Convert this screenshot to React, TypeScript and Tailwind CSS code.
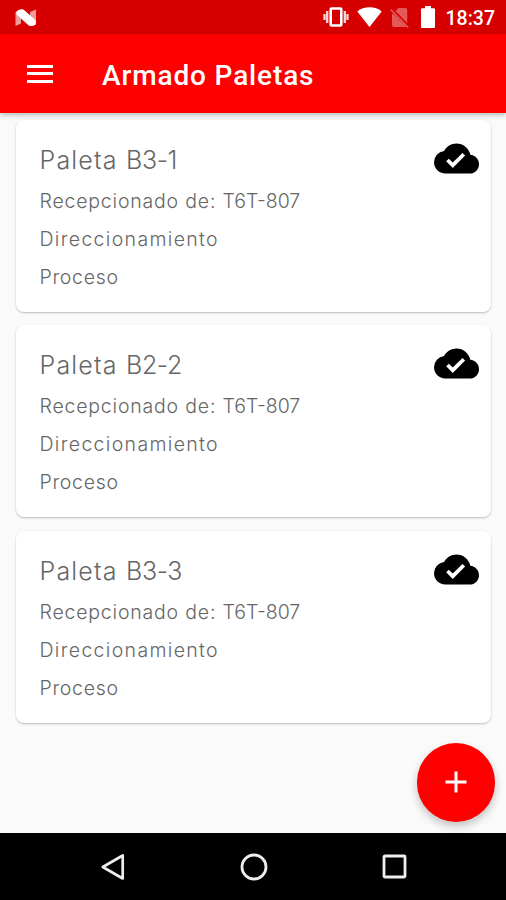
import { MdCloudDone } from 'react-icons/md';

const pallets = [
  { code: 'B3-1', source: 'T6T-807' },
  { code: 'B2-2', source: 'T6T-807' },
  { code: 'B3-3', source: 'T6T-807' },
];

const StatusBar = () => (
  <div className="flex h-[34px] shrink-0 items-center justify-between bg-[#d60000] pl-[15px] pr-[11px] text-white">
    <svg width="22" height="18" viewBox="0 0 22 18" className="mt-px">
      <path d="M.5 3L6 .5V14.500L.5 17zM15 3l6-2.500V14l-6 3z" fill="#fff" opacity=".6" />
      <path d="M1.500 2.500Q4.500-.2 8.500.4L20.800 11.500V15.500Q17.500 17.800 14 16.700L1.500 5.500z" fill="#fff" />
    </svg>
    <div className="flex items-center">
      <svg width="26" height="20" viewBox="0 0 26 20" className="mr-[8px]">
        <rect x="7.700" y="1.500" width="10.600" height="17" rx="1" fill="none" stroke="#fff" strokeWidth="2.600" />
        <path d="M4.200 4v12M1.500 7v6M21.800 4v12M24.500 7v6" stroke="#fff" strokeWidth="2.300" opacity=".85" />
      </svg>
      <svg width="25" height="20" viewBox="0 0 25 20" className="mr-[8px]">
        <path d="M12.500 20L.3 4.400C3.500 1.600 7.800.2 12.500.2S21.500 1.600 24.700 4.400z" fill="#fff" />
      </svg>
      <svg width="19" height="21" viewBox="0 0 19 21" className="mr-[12px] opacity-35">
        <path d="M8.400 1H15.500Q17.200 1 17.200 2.700V16L5.500 4zM3 6.500L16.500 20H4Q2 20 2 18V7.500z" fill="#fff" />
        <path d="M.7 2.500L18.200 20.500" stroke="#fff" strokeWidth="1.700" />
      </svg>
      <svg width="14" height="22" viewBox="0 0 14 22" className="mr-[10.500px]">
        <path d="M4 0h6v2.200h3Q14 2.200 14 3.200V21Q14 22 13 22H1Q0 22 0 21V3.200Q0 2.200 1 2.200h3z" fill="#fff" />
      </svg>
      <span className="mt-[3px] text-[19.500px] font-medium leading-none">18:37</span>
    </div>
  </div>
);

const AppBar = () => (
  <header className="z-10 flex h-[79px] shrink-0 items-center bg-[#ff0000] pl-[27px] text-white shadow-[0_2px_5px_rgba(0,30,30,0.28)]">
    <button className="flex w-[26px] flex-col gap-[4.500px]" aria-label="Menu">
      <span className="h-[3px] w-full bg-white" />
      <span className="h-[3px] w-full bg-white" />
      <span className="h-[3px] w-full bg-white" />
    </button>
    <h1 className="ml-[49px] mt-[4px] text-[28px] font-medium leading-none tracking-[0.860px]">Armado Paletas</h1>
  </header>
);

const PalletCard = ({ code, source }: { code: string; source: string }) => (
  <article className="flex h-[192px] items-start justify-between rounded-[8px] bg-white pl-[23.500px] pr-[12px] pt-[22px] font-['Inter','Liberation_Sans',sans-serif] font-light text-[#666] shadow-[0_1px_2px_rgba(0,0,0,0.25)]">
    <div>
      <h2 className="text-[25px] leading-9">
        <span className="tracking-[1.200px]">Paleta </span>
        <span className="tracking-[-0.400px]">{code}</span>
      </h2>
      <div className="mt-[4px] text-[19.500px] leading-[38px]">
        <p>
          <span className="tracking-[0.800px]">Recepcionado de: </span>
          <span>{source}</span>
        </p>
        <p className="tracking-[1.330px]">Direccionamiento</p>
        <p className="tracking-[0.700px]">Proceso</p>
      </div>
    </div>
    <MdCloudDone className="-mt-[6px] size-[45px] text-black" />
  </article>
);

const NavigationBar = () => (
  <nav className="flex h-[67px] shrink-0 items-center justify-between bg-black pl-[101px] pr-[99px]">
    <svg width="24" height="28" viewBox="0 0 24 28">
      <path d="M21.700 2.500v23L1.800 14z" fill="none" stroke="#eee" strokeWidth="2.700" strokeLinejoin="round" />
    </svg>
    <svg width="28" height="28" viewBox="0 0 28 28">
      <circle cx="14" cy="14" r="12" fill="none" stroke="#eee" strokeWidth="2.800" />
    </svg>
    <svg width="25" height="25" viewBox="0 0 25 25">
      <rect x="2" y="2" width="21" height="21" rx="1" fill="none" stroke="#eee" strokeWidth="2.800" />
    </svg>
  </nav>
);

const App = () => {
  return (
    <div className="flex h-screen flex-col overflow-hidden bg-[#fafafa] font-['Roboto','Liberation_Sans',sans-serif]">
      <StatusBar />
      <AppBar />
      <main className="relative flex flex-1 flex-col gap-[13.300px] pl-4 pr-[15px] pt-[7px]">
        {pallets.map((pallet) => (
          <PalletCard key={pallet.code} {...pallet} />
        ))}
        <button
          aria-label="Agregar paleta"
          className="absolute bottom-[11.500px] right-[11px] flex size-[78.500px] items-center justify-center rounded-full bg-[#ff0000] shadow-[0_4px_8px_rgba(0,0,0,0.24)]"
        >
          <svg width="22" height="22" viewBox="0 0 22 22">
            <path d="M11 .5v21M.5 11h21" stroke="#fff" strokeWidth="3" />
          </svg>
        </button>
      </main>
      <NavigationBar />
    </div>
  );
};

export default App;
